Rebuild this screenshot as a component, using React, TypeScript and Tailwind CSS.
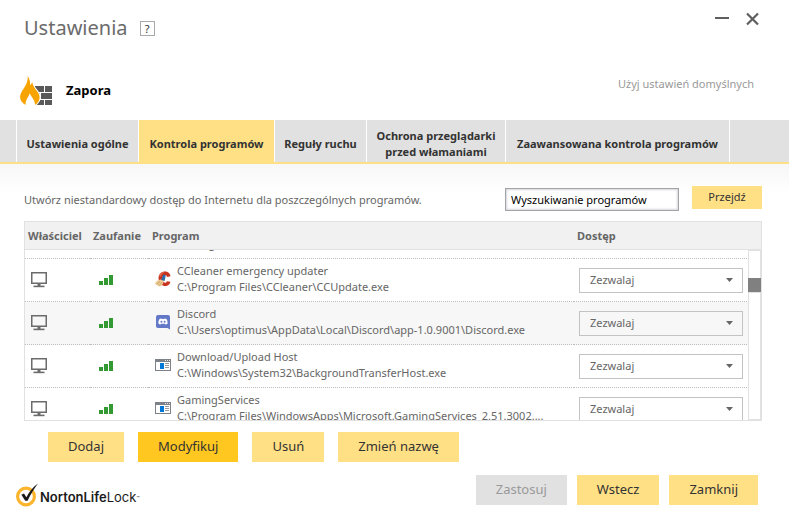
import { useLayoutEffect, useRef } from 'react';

type ProgramIconName = 'ccleaner' | 'discord' | 'window';

interface Program {
  name: string;
  path: string;
  icon: ProgramIconName;
  selected?: boolean;
}

const programs: Program[] = [
  { name: 'CCleaner', path: 'C:\\Program Files\\CCleaner\\CCleaner64.exe', icon: 'ccleaner' },
  { name: 'CCleaner emergency updater', path: 'C:\\Program Files\\CCleaner\\CCUpdate.exe', icon: 'ccleaner' },
  { name: 'Discord', path: 'C:\\Users\\optimus\\AppData\\Local\\Discord\\app-1.0.9001\\Discord.exe', icon: 'discord', selected: true },
  { name: 'Download/Upload Host', path: 'C:\\Windows\\System32\\BackgroundTransferHost.exe', icon: 'window' },
  { name: 'GamingServices', path: 'C:\\Program Files\\WindowsApps\\Microsoft.GamingServices_2.51.3002....', icon: 'window' },
];

const tabs = [
  { label: 'Ustawienia ogólne', width: 'w-[122px]' },
  { label: 'Kontrola programów', width: 'w-[136px]', active: true },
  { label: 'Reguły ruchu', width: 'w-[92px]' },
  { label: 'Ochrona przeglądarki przed włamaniami', width: 'w-[139px]' },
  { label: 'Zaawansowana kontrola programów', width: 'w-[224px]' },
];

function FirewallIcon() {
  return (
    <svg width="34" height="30" viewBox="0 0 34 30" aria-hidden="true">
      <g fill="#595959">
        <path d="M15 10h9v6h-9z" />
        <path d="M25 10h7v6h-7z" />
        <path d="M17 17h3v6h-3z" />
        <path d="M21 17h11v6H21z" />
        <path d="M17 24h7v5h-7z" />
        <path d="M25 24h7v5h-7z" />
      </g>
      <path
        fill="#f7a400"
        stroke="#fff"
        strokeWidth="2"
        paintOrder="stroke"
        d="M7.700 0C9.500 2.500 10.300 5.500 10.300 9.500L12.300 6.300C12.800 10 14.800 12.500 17.300 15.500C21 20 20.200 25.500 15 29C15.300 24.500 11.500 21.500 9.700 17.300C8.500 21.500 5 24.500 5.700 29C-0.500 25.500-1 20.500 1.500 16C4 11.500 8.200 7 7.700 0Z"
      />
    </svg>
  );
}

function MonitorIcon() {
  return (
    <svg width="16" height="16" viewBox="0 0 16 16" role="img" aria-label="Komputer" className="block">
      <path d="M0.750 0.750h14.500v10.500H.75z" fill="none" stroke="#6b6b6b" strokeWidth="1.500" />
      <path d="M6.500 12h3v2h-3z" fill="#6b6b6b" />
      <path d="M2.500 13.600h11v1.600h-11z" fill="#6b6b6b" />
    </svg>
  );
}

function TrustIcon() {
  return (
    <svg width="14" height="10" viewBox="0 0 14 10" role="img" aria-label="Dobre zaufanie" className="block">
      <path d="M0 6h4v4H0zM5 3h4v7H5zM10 0h4v10h-4z" fill="#339933" />
    </svg>
  );
}

function ProgramIcon({ name }: { name: ProgramIconName }) {
  if (name === 'ccleaner') {
    return (
      <svg width="16" height="16" viewBox="0 0 16 16" aria-hidden="true" className="block shrink-0">
        <path
          d="M15.500 5.200C15.200 2 12.500.2 9.500.4C5.500.7 3.200 4 3.600 8C4 12.500 7.500 15.400 11 15C13.500 14.700 15.200 13 15.300 10.800L11.800 10.200C11.500 11.700 10.500 12 9.500 11.600C7.800 11 7.200 9 7.400 7C7.600 5 8.600 3.900 10 4C11.300 4.100 11.800 4.800 12 5.900Z"
          fill="#c9331f"
        />
        <path d="M4 5C5 1.600 8 .2 11 .8C8.500 1.400 6.600 2.900 5.600 5.400Z" fill="#e2694f" />
        <path d="M6.200 9L8.200 3.600L10.800 4.200L9.600 10Z" fill="#2b6ca8" />
        <path d="M0 12.500C1 10.500 3 8.800 5.800 8.600L8.600 10.200C8.400 12.600 7 14.600 4.800 15.500C3 14.900 1.200 13.800 0 12.500Z" fill="#ecca92" />
        <path d="M1.800 13.200L5 10.400M4.200 14.600L6.800 11.200" stroke="#b98d4e" strokeWidth="0.600" />
      </svg>
    );
  }
  if (name === 'discord') {
    return (
      <svg width="16" height="16" viewBox="0 0 16 16" aria-hidden="true" className="block shrink-0">
        <path d="M3 1h10a2 2 0 0 1 2 2v12.500L12.500 14H3a2 2 0 0 1-2-2V3a2 2 0 0 1 2-2z" fill="#6478c8" />
        <path
          d="M4.400 5.200C5 4.800 6 4.600 6.400 4.600L6.700 5H9.300L9.600 4.600C10 4.600 11 4.800 11.600 5.200C12.400 6.500 12.700 8 12.600 9.600C12 10.200 11.200 10.500 10.500 10.500L9.900 9.800H6.100L5.500 10.500C4.800 10.500 4 10.200 3.400 9.600C3.300 8 3.600 6.500 4.400 5.200Z"
          fill="#fff"
        />
        <circle cx="6.400" cy="7.800" r="1" fill="#6478c8" />
        <circle cx="9.600" cy="7.800" r="1" fill="#6478c8" />
      </svg>
    );
  }
  return (
    <svg width="16" height="16" viewBox="0 0 16 16" aria-hidden="true" className="block shrink-0">
      <path d="M0 2h16v12H0z" fill="#7d8288" />
      <path d="M1 5h14v8H1z" fill="#fff" />
      <path d="M10 3h1v1h-1zM12 3h1v1h-1zM14 3h1v1h-1z" fill="#e8e8e8" />
      <path d="M5 6h4v6H5z" fill="#0078d7" />
      <path d="M10 6h4v1h-4zM10 8h4v1h-4zM10 10h4v1h-4z" fill="#9a9a9a" />
    </svg>
  );
}

function ProgramRow({ program }: { program: Program }) {
  const cell = 'h-[43px] border-b border-dotted border-[#bdbdbd] p-0 align-middle';
  return (
    <tr className={program.selected ? 'bg-[#f7f7f7]' : 'bg-white'}>
      <td className={cell}>
        <div className="pl-[6px]">
          <MonitorIcon />
        </div>
      </td>
      <td className={cell}>
        <div className="pl-[9px]">
          <TrustIcon />
        </div>
      </td>
      <td className={cell}>
        <div className="flex items-center gap-[6px] pb-[2px] pl-[7px] whitespace-nowrap">
          <ProgramIcon name={program.icon} />
          <div className="leading-4">
            <div>{program.name}</div>
            <div>{program.path}</div>
          </div>
        </div>
      </td>
      <td className={cell}>
        <div className="relative ml-[5px] w-[164px]">
          <select
            aria-label={'Dostęp: ' + program.name}
            defaultValue="allow"
            className="block h-[25px] w-full appearance-none border border-[#c3c3c3] bg-transparent pl-[10px] text-[11px] text-[#666]"
          >
            <option value="allow">Zezwalaj</option>
            <option value="block">Blokuj</option>
          </select>
          <svg width="7" height="4" viewBox="0 0 7 4" aria-hidden="true" className="pointer-events-none absolute top-[10px] right-[10px]">
            <path d="M0 0h7L3.500 4z" fill="#666" />
          </svg>
        </div>
      </td>
    </tr>
  );
}

function ProgramTable() {
  const scroller = useRef<HTMLDivElement>(null);
  useLayoutEffect(() => {
    if (scroller.current) scroller.current.scrollTop = 34;
  }, []);
  const head = 'sticky top-0 z-10 h-[28px] border-b border-[#e1e1e1] bg-[#f1f1f1] pt-[2px] pr-0 pb-0 text-left font-bold';
  return (
    <div className="relative mt-[10px] border border-[#e1e1e1] text-[11px] text-[#666]">
      <div ref={scroller} className="h-[198px] overflow-y-auto [scrollbar-width:none]">
        <table className="w-full table-fixed border-separate border-spacing-0">
          <colgroup>
            <col className="w-[65px]" />
            <col className="w-[58px]" />
            <col />
            <col className="w-[187px]" />
          </colgroup>
          <thead>
            <tr>
              <th className={head + ' pl-[3px]'}>Właściciel</th>
              <th className={head + ' pl-[3px]'}>Zaufanie</th>
              <th className={head + ' pl-[4px]'}>Program</th>
              <th className={head + ' pl-[3px]'}>Dostęp</th>
            </tr>
          </thead>
          <tbody>
            {programs.map((p) => (
              <ProgramRow key={p.name} program={p} />
            ))}
          </tbody>
        </table>
      </div>
      <div className="absolute top-[28px] right-0 bottom-0 z-20 w-[13px] border border-[#e1e1e1] bg-white">
        <div className="-mx-px mt-[27px] h-[15px] border-b border-[#e1e1e1] bg-[#808080]" />
      </div>
    </div>
  );
}

function NortonLogo() {
  return (
    <div className="flex items-end gap-px">
      <svg width="23" height="24" viewBox="0 0 23 24" aria-hidden="true">
        <circle cx="10" cy="13.500" r="8.400" fill="#fff" stroke="#fbb42c" strokeWidth="3.200" />
        <path d="M5.400 11.800L8 10.600L10.400 14.200C13 9 16.500 4.500 22 0.500C18.500 5 14.500 11.500 11.600 17.800H9.200Z" fill="#1a1a1a" />
      </svg>
      <span className="font-[Inter,sans-serif] text-[13px] leading-5 font-semibold text-[#1a1a1a]">
        NortonLife<span className="font-normal">Lock</span>
        <sup className="text-[5px] font-normal">™</sup>
      </span>
    </div>
  );
}

export default function App() {
  const action = 'h-[30px] px-5 text-[13px] text-[#333]';
  return (
    <main className="bg-white font-['Noto_Sans',sans-serif] text-[11px] text-[#666]">
      <header className="flex h-[76px] items-start justify-between pt-[10px] pr-[30px] pl-6">
        <div className="flex items-center gap-3">
          <h1 className="text-[20px] leading-9 text-[#6b6b6b]">Ustawienia</h1>
          <button type="button" aria-label="Pomoc" className="flex size-[15px] items-center justify-center border border-[#a9a9a9] text-[11px] leading-none text-[#333]">
            ?
          </button>
        </div>
        <div className="flex gap-4 pt-[2px]">
          <button type="button" aria-label="Minimalizuj">
            <svg width="15" height="14" viewBox="0 0 15 14">
              <path d="M0 5h14v2H0z" fill="#5f5f5f" />
            </svg>
          </button>
          <button type="button" aria-label="Zamknij okno">
            <svg width="13" height="14" viewBox="0 0 13 14">
              <path d="M1 1.500l11 11M12 1.500l-11 11" stroke="#5f5f5f" strokeWidth="2.200" />
            </svg>
          </button>
        </div>
      </header>

      <div className="flex h-11 items-start justify-between pr-[35px] pl-5">
        <div className="flex items-center gap-3">
          <FirewallIcon />
          <h2 className="text-[13px] font-bold text-black">Zapora</h2>
        </div>
        <a href="#domyslne" className="leading-4 text-[#999]">
          Użyj ustawień domyślnych
        </a>
      </div>

      <nav className="flex h-11 border-b-2 border-[#ffe085] bg-[#e1e1e1] pl-4">
        {tabs.map((t) => (
          <button
            key={t.label}
            type="button"
            aria-current={t.active ? 'page' : undefined}
            className={
              t.width +
              ' border-l border-white px-1 pt-[6px] leading-4 font-bold text-[#333]' +
              (t.active ? ' bg-[#ffe085]' : '')
            }
          >
            {t.label}
          </button>
        ))}
        <div className="border-l border-white" />
      </nav>

      <div className="bg-linear-to-b from-[#f7f7f7] to-white to-[30px] px-6 pr-[27px] pt-[22px]">
        <form className="flex items-start" onSubmit={(e) => e.preventDefault()}>
          <label htmlFor="program-search" className="flex-1 pt-[6px] leading-4 whitespace-nowrap">
            Utwórz niestandardowy dostęp do Internetu dla poszczególnych programów.
          </label>
          <input
            id="program-search"
            type="text"
            defaultValue="Wyszukiwanie programów"
            className="mt-[2px] h-[23px] w-[174px] border border-[#a3a3a8] bg-white px-[5px] text-black shadow-[inset_0_0_2px_1px_#d5d5dc]"
          />
          <button type="submit" className="ml-[13px] h-[23px] w-[70px] bg-[#ffe085] text-[#333]">
            Przejdź
          </button>
        </form>
        <ProgramTable />
        <div className="flex gap-[14px] pt-[11px] pl-6">
          <button type="button" className={action + ' bg-[#ffe085]'}>Dodaj</button>
          <button type="button" className={action + ' bg-[#ffc71f]'}>Modyfikuj</button>
          <button type="button" className={action + ' bg-[#ffe085]'}>Usuń</button>
          <button type="button" className={action + ' bg-[#ffe085]'}>Zmień nazwę</button>
        </div>
      </div>

      <footer className="flex items-start justify-between pt-[13px] pr-[31px] pb-[19px] pl-4">
        <div className="pt-2">
          <NortonLogo />
        </div>
        <div className="flex gap-[10px]">
          <button type="button" disabled className="h-[30px] bg-[#e1e1e1] px-5 text-[13px] text-[#999]">Zastosuj</button>
          <button type="button" className={action + ' bg-[#ffe085]'}>Wstecz</button>
          <button type="button" className={action + ' bg-[#ffe085]'}>Zamknij</button>
        </div>
      </footer>
    </main>
  );
}
